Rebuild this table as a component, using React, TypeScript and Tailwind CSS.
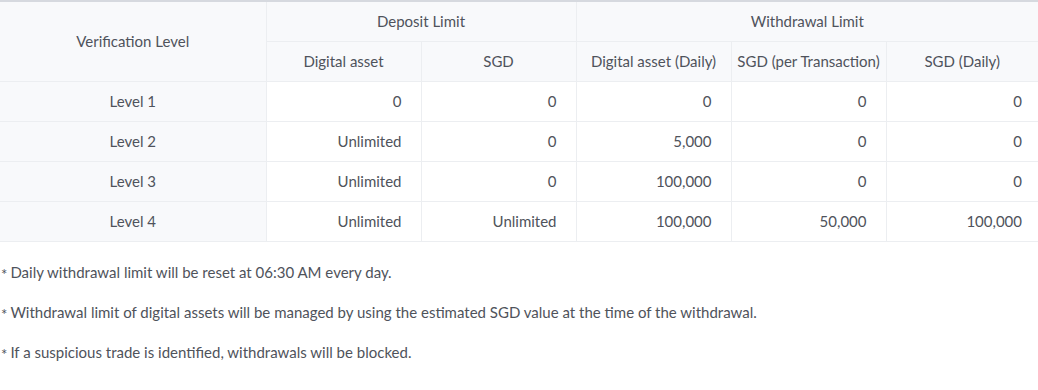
const rows = [
  { level: 'Level 1', values: ['0', '0', '0', '0', '0'] },
  { level: 'Level 2', values: ['Unlimited', '0', '5,000', '0', '0'] },
  { level: 'Level 3', values: ['Unlimited', '0', '100,000', '0', '0'] },
  { level: 'Level 4', values: ['Unlimited', 'Unlimited', '100,000', '50,000', '100,000'] },
];

const notes = [
  'Daily withdrawal limit will be reset at 06:30 AM every day.',
  'Withdrawal limit of digital assets will be managed by using the estimated SGD value at the time of the withdrawal.',
  'If a suspicious trade is identified, withdrawals will be blocked.',
];

const App = () => {
  return (
    <div className="w-[1038px] bg-white text-[15px] text-[#4f535b] font-['Lato','Liberation_Sans',sans-serif]">
      <table className="w-[1038px] table-fixed border-collapse border-t-2 border-[#d6d9df]">
        <colgroup>
          <col className="w-[266px]" />
          <col className="w-[155px]" />
          <col className="w-[155px]" />
          <col className="w-[155px]" />
          <col className="w-[155px]" />
          <col className="w-[152px]" />
        </colgroup>
        <thead className="bg-[#f8f9fb]">
          <tr className="h-[40px]">
            <th rowSpan={2} className="font-normal border-b border-r border-[#eceef1]">
              Verification Level
            </th>
            <th colSpan={2} className="font-normal border-b border-r border-[#eceef1]">
              Deposit Limit
            </th>
            <th colSpan={3} className="font-normal border-b border-[#eceef1]">
              Withdrawal Limit
            </th>
          </tr>
          <tr className="h-[40px]">
            <th className="font-normal border-b border-r border-[#eceef1]">Digital asset</th>
            <th className="font-normal border-b border-r border-[#eceef1]">SGD</th>
            <th className="font-normal border-b border-r border-[#eceef1]">Digital asset (Daily)</th>
            <th className="font-normal border-b border-r border-[#eceef1]">SGD (per Transaction)</th>
            <th className="font-normal border-b border-[#eceef1]">SGD (Daily)</th>
          </tr>
        </thead>
        <tbody>
          {rows.map((row) => (
            <tr key={row.level} className="h-[40px]">
              <td className="bg-[#f8f9fb] text-center border-b border-r border-[#eceef1]">{row.level}</td>
              {row.values.map((v, i) => (
                <td
                  key={i}
                  className={
                    i === 4
                      ? 'text-right pr-[16px] border-b border-[#eceef1]'
                      : 'text-right pr-[19px] border-b border-r border-[#eceef1]'
                  }
                >
                  {v}
                </td>
              ))}
            </tr>
          ))}
        </tbody>
      </table>

      <div className="pt-[20px] pl-[1px] flex flex-col gap-[20px]">
        {notes.map((note) => (
          <p key={note} className="leading-[20px] flex items-center">
            <span className="text-[15px] leading-none mr-[3px] mt-[5px]">*</span>
            {note}
          </p>
        ))}
      </div>
    </div>
  );
};

export default App;
